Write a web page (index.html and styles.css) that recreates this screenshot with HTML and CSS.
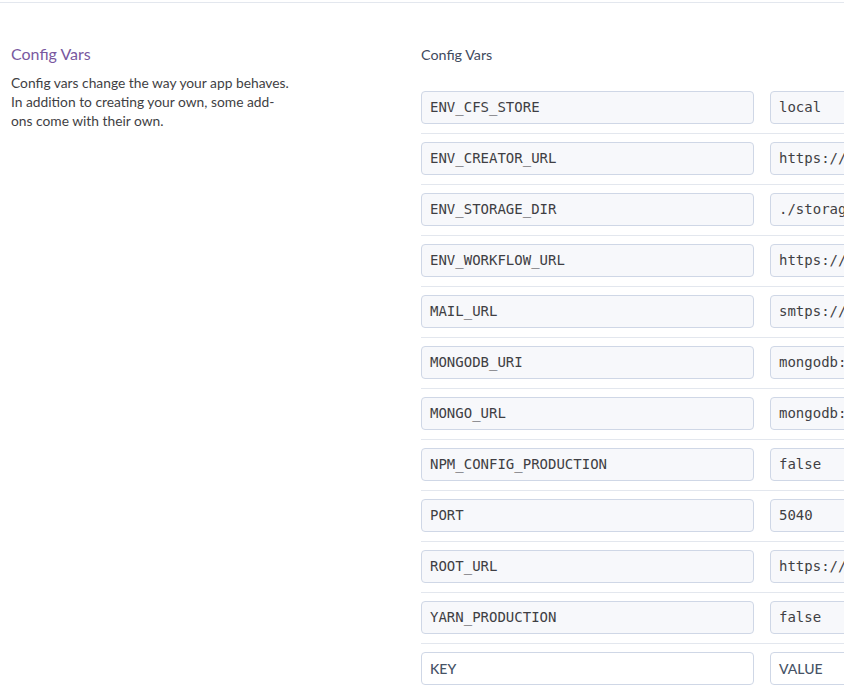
FILE: index.html
```html
<!DOCTYPE html>
<html>
<head>
<meta charset="utf-8">
<link rel="stylesheet" href="styles.css">
</head>
<body>
<div class="section">
  <div class="info">
    <h2 class="info-title">Config Vars</h2>
    <p class="info-text">Config vars change the way your app behaves. In addition to creating your own, some add-ons come with their own.</p>
  </div>
  <div class="vars">
    <div class="vars-label">Config Vars</div>
    <div class="row"><div class="field key">ENV_CFS_STORE</div><div class="field val">local</div></div>
    <div class="row"><div class="field key">ENV_CREATOR_URL</div><div class="field val">https://creator.example.com</div></div>
    <div class="row"><div class="field key">ENV_STORAGE_DIR</div><div class="field val">./storage</div></div>
    <div class="row"><div class="field key">ENV_WORKFLOW_URL</div><div class="field val">https://workflow.example.com</div></div>
    <div class="row"><div class="field key">MAIL_URL</div><div class="field val">smtps://mail.example.com</div></div>
    <div class="row"><div class="field key">MONGODB_URI</div><div class="field val">mongodb://db.example.com</div></div>
    <div class="row"><div class="field key">MONGO_URL</div><div class="field val">mongodb://db.example.com</div></div>
    <div class="row"><div class="field key">NPM_CONFIG_PRODUCTION</div><div class="field val">false</div></div>
    <div class="row"><div class="field key">PORT</div><div class="field val">5040</div></div>
    <div class="row"><div class="field key">ROOT_URL</div><div class="field val">https://app.example.com</div></div>
    <div class="row"><div class="field key">YARN_PRODUCTION</div><div class="field val">false</div></div>
    <div class="row last"><div class="field key new">KEY</div><div class="field val new">VALUE</div></div>
  </div>
</div>
</body>
</html>
```
FILE: styles.css
```css
html, body {
  margin: 0;
  padding: 0;
  background: #fff;
  overflow: hidden;
}
body {
  width: 844px;
  height: 692px;
  font-family: Lato, "Open Sans", sans-serif;
  color: #3f3f44;
}
.section {
  margin-top: 2px;
  border-top: 1px solid #e3e7ee;
  display: flex;
  padding-top: 39px;
}
.info {
  width: 282px;
  padding-left: 11px;
  flex: none;
}
.info-title {
  margin: 0;
  font-size: 16px;
  font-weight: 400;
  line-height: 24px;
  color: #79589f;
}
.info-text {
  margin: 7px 0 0;
  font-size: 13.8px;
  line-height: 19px;
  color: #3f3f44;
}
.vars {
  margin-left: 128px;
  flex: none;
  width: 440px;
}
.vars-label {
  font-size: 14.3px;
  line-height: 24px;
  color: #3f4a5e;
  margin-top: 1px;
  margin-bottom: 24px;
}
.row {
  display: flex;
  gap: 16px;
  padding-bottom: 9px;
  margin-bottom: 8px;
  border-bottom: 1px solid #e3e7ee;
}
.row.last {
  border-bottom: none;
}
.field {
  box-sizing: border-box;
  height: 33px;
  border: 1px solid #cfd7e6;
  border-radius: 4px;
  background: #f7f8fb;
  padding: 0 8px 1px;
  display: flex;
  align-items: center;
  font-family: "DejaVu Sans Mono", monospace;
  font-size: 14px;
  color: #3f3f44;
  white-space: nowrap;
  overflow: hidden;
}
.key {
  width: 333px;
  flex: none;
}
.val {
  width: 333px;
  flex: none;
}
.field.new {
  background: #fff;
  font-family: Lato, "Open Sans", sans-serif;
  font-size: 14px;
  font-weight: 500;
  color: #475366;
}
```
